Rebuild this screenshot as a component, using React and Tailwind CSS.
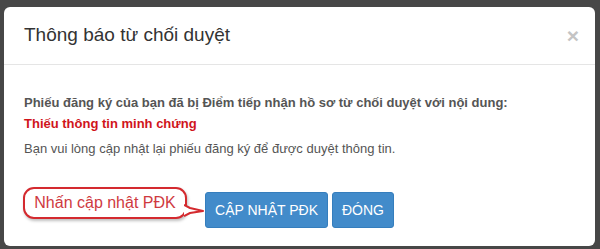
export default function App() {
  return (
    <div className="h-[249px] w-[600px] bg-[#474747] pl-[4px] pt-[7px] font-['Liberation_Sans',Arial,sans-serif]">
      <div className="h-[239px] w-[591px] overflow-hidden rounded-[6px] bg-white">
        {/* Header */}
        <div className="flex h-[58px] items-center justify-between border-b border-[#e5e5e5] pl-[20px] pr-[16px]">
          <h4 className="text-[19px] text-[#333]">Thông báo từ chối duyệt</h4>
          <button className="text-[21px] font-bold leading-none text-[#c4c4c4]">×</button>
        </div>

        {/* Body */}
        <div className="pl-[20px] pt-[27px] text-[13px] leading-[21px] text-[#555]">
          <p className="font-bold">
            Phiếu đăng ký của bạn đã bị Điểm tiếp nhận hồ sơ từ chối duyệt với nội dung:
          </p>
          <p className="font-bold text-[#d0141b]">Thiếu thông tin minh chứng</p>
          <p className="mt-[4px]">Bạn vui lòng cập nhật lại phiếu đăng ký để được duyệt thông tin.</p>
        </div>

        {/* Footer */}
        <div className="mt-[28px] flex items-start pl-[19px]">
          <div className="relative mr-[18px] flex h-[32px] w-[164px] items-center justify-center rounded-[11px] border-2 border-[#d42a2f] bg-white shadow-[1px_2px_3px_rgba(0,0,0,0.25)]">
            <span className="text-[16px] text-[#cf3a3f]">Nhấn cập nhật PĐK</span>
            <svg className="absolute -right-[19px] top-[15px]" width="20" height="14" viewBox="0 0 20 14">
              <path d="M0 1 L6 4 L19 7 L6 9 L0 12" fill="white" stroke="#d42a2f" strokeWidth="2" strokeLinejoin="round" />
            </svg>
          </div>
          <button className="mt-[5px] h-[36px] w-[123px] rounded-[3px] border border-[#357ebd] bg-[#428bca] text-[14px] text-white">
            CẬP NHẬT PĐK
          </button>
          <button className="ml-[4px] mt-[5px] h-[36px] w-[62px] rounded-[3px] border border-[#357ebd] bg-[#428bca] text-[14px] text-white">
            ĐÓNG
          </button>
        </div>
      </div>
    </div>
  );
}
